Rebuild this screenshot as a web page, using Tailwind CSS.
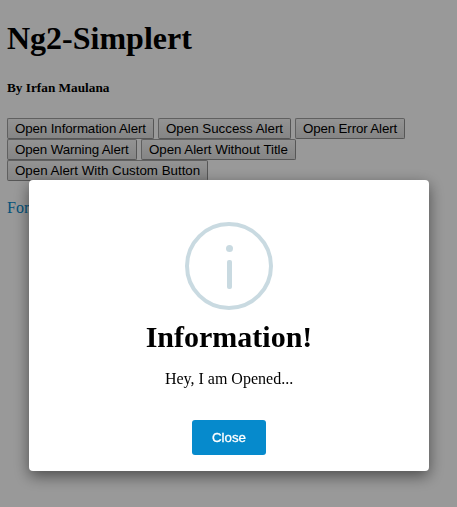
<!DOCTYPE html>
<html lang="en">
<head>
<meta charset="utf-8">
<title>Ng2-Simplert</title>
<script src="https://cdn.jsdelivr.net/npm/@tailwindcss/browser@4"></script>
</head>
<body class="h-screen overflow-hidden bg-white font-['Liberation_Serif',serif] text-black">
<main class="pl-[7px] pt-5">
  <h1 class="h-[37px] text-[32px] font-bold leading-[37px]">Ng2-Simplert</h1>
  <h5 class="mt-[23px] h-4 text-[13.28px] font-bold leading-4">By Irfan Maulana</h5>
  <div class="mt-[22px] flex flex-col font-['Liberation_Sans',sans-serif] text-[13.333px] leading-[15px]">
    <div class="flex gap-1">
      <button class="h-[21px] w-[147px] whitespace-nowrap rounded-[2px] border border-[#a0a0a0] border-b-[#8f8f8f] border-r-[#8f8f8f] bg-linear-to-b from-[#f6f6f6] to-[#dedede] pl-[7px] text-left tracking-[-0.11px]">Open Information Alert</button>
      <button class="h-[21px] w-[133px] whitespace-nowrap rounded-[2px] border border-[#a0a0a0] border-b-[#8f8f8f] border-r-[#8f8f8f] bg-linear-to-b from-[#f6f6f6] to-[#dedede] pl-[7px] text-left">Open Success Alert</button>
      <button class="h-[21px] w-[110px] whitespace-nowrap rounded-[2px] border border-[#a0a0a0] border-b-[#8f8f8f] border-r-[#8f8f8f] bg-linear-to-b from-[#f6f6f6] to-[#dedede] pl-[7px] text-left tracking-[-0.14px]">Open Error Alert</button>
    </div>
    <div class="flex gap-1">
      <button class="h-[21px] w-[130px] whitespace-nowrap rounded-[2px] border border-[#a0a0a0] border-b-[#8f8f8f] border-r-[#8f8f8f] bg-linear-to-b from-[#f6f6f6] to-[#dedede] pl-[7px] text-left tracking-[-0.12px]">Open Warning Alert</button>
      <button class="h-[21px] w-[155px] whitespace-nowrap rounded-[2px] border border-[#a0a0a0] border-b-[#8f8f8f] border-r-[#8f8f8f] bg-linear-to-b from-[#f6f6f6] to-[#dedede] pl-[7px] text-left tracking-[-0.05px]">Open Alert Without Title</button>
    </div>
    <button class="h-[21px] w-[201px] whitespace-nowrap rounded-[2px] border border-[#a0a0a0] border-b-[#8f8f8f] border-r-[#8f8f8f] bg-linear-to-b from-[#f6f6f6] to-[#dedede] pl-[7px] text-left">Open Alert With Custom Button</button>
  </div>
  <a class="mt-[18px] block text-base leading-[18px] text-[#068acc]">For</a>
</main>
<div class="fixed inset-0 bg-black/40 pl-[29px] pt-[180px]">
  <section role="dialog" class="flex h-[291px] w-[400px] flex-col items-center rounded-[4px] bg-white pt-[42px] shadow-[0_5px_15px_rgba(0,0,0,0.5)]">
    <svg class="size-[88px] shrink-0" viewBox="0 0 88 88" fill="none">
      <circle cx="44" cy="44" r="42" stroke="#c9dae1" stroke-width="4"/>
      <circle cx="44.5" cy="26.5" r="3.5" fill="#c9dae1"/>
      <rect x="42" y="38" width="5" height="29" rx="2" fill="#c9dae1"/>
    </svg>
    <h2 class="mt-[9px] text-[30px] font-bold leading-[36px]">Information!</h2>
    <p class="mt-[15px] text-base leading-[18px]">Hey, I am Opened...</p>
    <button class="mt-8 h-[35px] w-[74px] rounded-[3px] bg-[#068acc] font-['Liberation_Sans',sans-serif] text-[13.333px] leading-[15px] text-white [-webkit-text-stroke:0.3px_white]">Close</button>
  </section>
</div>
</body>
</html>
